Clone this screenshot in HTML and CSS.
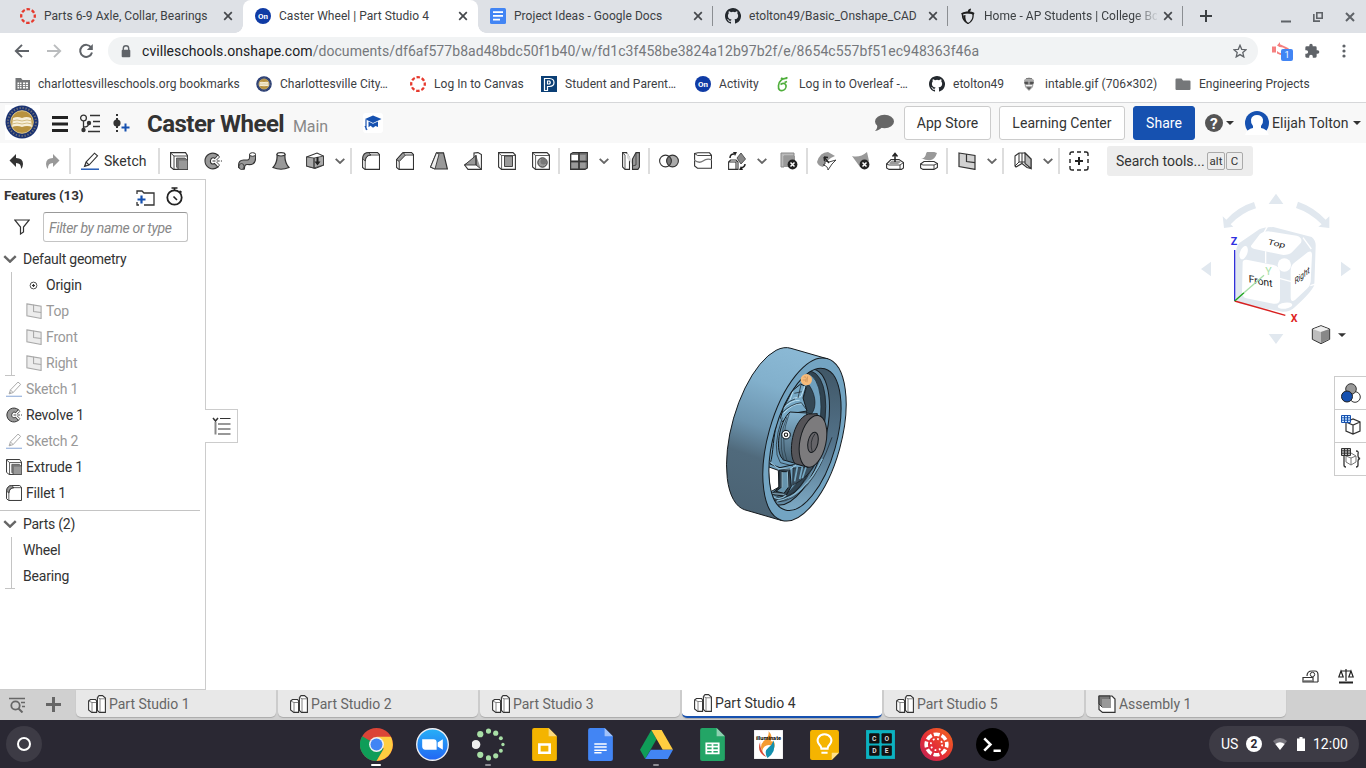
FILE: index.html
```html
<!DOCTYPE html>
<html lang="en">
<head>
<meta charset="utf-8">
<title>Caster Wheel | Part Studio 4</title>
<link rel="stylesheet" href="styles.css">
</head>
<body>
<svg class="defs" width="0" height="0">
  <symbol id="x" viewBox="0 0 10 10"><path d="M1.2 1.2l7.6 7.6M8.8 1.2L1.2 8.8" stroke="#45484c" stroke-width="1.7" fill="none"/></symbol>
  <symbol id="canvas" viewBox="0 0 16 16"><circle cx="8" cy="8" r="6.8" fill="none" stroke="#e63a2e" stroke-width="2.3" stroke-dasharray="3.5 1.84" stroke-dashoffset="1.7"/></symbol>
  <symbol id="on" viewBox="0 0 16 16"><circle cx="8" cy="8" r="8" fill="#0f3ba5"/><text x="8" y="11" font-size="8" font-weight="700" fill="#fff" text-anchor="middle" font-family="Roboto, sans-serif">On</text></symbol>
  <symbol id="github" viewBox="0 0 16 16"><path fill="#24292e" d="M8 0C3.58 0 0 3.58 0 8c0 3.54 2.29 6.53 5.47 7.59.4.07.55-.17.55-.38v-1.49c-2.23.48-2.7-.95-2.7-.95-.36-.92-.89-1.17-.89-1.17-.73-.5.05-.49.05-.49.81.06 1.23.83 1.23.83.72 1.23 1.88.87 2.34.67.07-.52.28-.88.51-1.08-1.78-.2-3.64-.89-3.64-3.95 0-.87.31-1.59.82-2.15-.08-.2-.36-1.02.08-2.12 0 0 .67-.21 2.2.82a7.6 7.6 0 0 1 4 0c1.53-1.04 2.2-.82 2.2-.82.44 1.1.16 1.92.08 2.12.51.56.82 1.27.82 2.15 0 3.07-1.87 3.75-3.65 3.95.29.25.54.73.54 1.48v2.2c0 .21.15.46.55.38A8 8 0 0 0 8 0z"/></symbol>
  <symbol id="chev" viewBox="0 0 10 6"><path d="M.7.8L5 5 9.300.8" fill="none" stroke="#666" stroke-width="1.8"/></symbol>
  <symbol id="caret" viewBox="0 0 8 4"><path d="M0 0h8L4 4z" fill="#333"/></symbol>
  <symbol id="seal" viewBox="0 0 34 34"><circle cx="17" cy="17" r="16.500" fill="#1c3473"/><circle cx="17" cy="17" r="14" fill="none" stroke="#6f7078" stroke-width="2" stroke-dasharray="1.300 1.700"/><circle cx="17" cy="17" r="11.300" fill="#b8923f" stroke="#d8c38a"/><path d="M8 13q4.500-2 9 0q4.500-2 9 0l1 9q-5-2-10 0q-5-2-10 0z" fill="#f6eed8"/><path d="M7 16q5-2 10 0q5-2 10 0M7 19q5-2 10 0q5-2 10 0" fill="none" stroke="#d3bc82"/></symbol>
  <symbol id="pencil" viewBox="0 0 18 18"><path d="M3.500 14.500L5 10 13.500 1.200 16.500 3.800 8 13zM5 10L8 13" fill="#fff" stroke="#333" stroke-width="1.100"/><path d="M3.500 14.500l1-2.500 1.500 1.400z" fill="#333"/><path d="M0 17.200h18" stroke="#1651b0" stroke-width="1.400"/></symbol>
  <symbol id="extrude" viewBox="0 0 18 18"><path d="M.6.6H15.500L17.400 3.500V17.400H3.500L.6 15z" fill="#fff" stroke="#333" stroke-width="1.100"/><path d="M.6 1L4 4V17.400M4 4H17.400" fill="none" stroke="#333" stroke-width=".9"/><path d="M6.500 6H15l2.400 2.400v9H8.800L6.500 15z" fill="#777" stroke="#444" stroke-width=".7"/><path d="M9 8.600h8.200v8.400H9z" fill="#999"/></symbol>
  <symbol id="revolve" viewBox="0 0 18 18"><path d="M14 3C8-1.500 1 3 1 9s7 10.500 13 6l-3.500-3.500C8 13 6 11 6.500 8.500S9 5 11 6.500z" fill="#999" stroke="#333" stroke-width="1.100"/><path d="M8.500 9H18" stroke="#333" stroke-dasharray="3 1.200"/><path d="M11 6.500L14 3l1.500 2-3 3M11 11.500l3 3.500 1.500-2-3-3" fill="#fff" stroke="#333" stroke-width=".9"/></symbol>
  <symbol id="fillet" viewBox="0 0 18 18"><path d="M.6 6.500C1 3 3 .6 6 .6h9.500l2 2V17.400H3l-2.400-2z" fill="#fff" stroke="#333" stroke-width="1.100"/><path d="M.7 7C1 3 3 .7 6.500.7L9 3C5.500 3.300 3.500 5.500 3.300 9z" fill="#999" stroke="#333" stroke-width=".8"/><path d="M3.200 17V9C3.500 5 5.500 3 9 3h8.300" fill="none" stroke="#333" stroke-width=".9"/></symbol>
  <symbol id="plane" viewBox="0 0 18 18"><path d="M1 1l16 2.500V17.400L1 14.500z" fill="#d2d2d2" stroke="#333" stroke-width="1.200"/><path d="M8.500 2v7.500l8.500 1.200" fill="none" stroke="#333" stroke-width="1.200"/></symbol>
  <symbol id="studio" viewBox="0 0 18 18"><path d="M.6 6L2.500 4.500H7.500L8.600 6V17.400H3.800L.6 15z" fill="#fff" stroke="#333" stroke-width="1.100"/><path d="M.6 6L4 7.500V17M4 7.500H8.500" fill="none" stroke="#666" stroke-width=".8"/><path d="M9.400 2.500L11 .6H14.500L17.400 3V17.400H11.500L9.400 15.500z" fill="#fff" stroke="#333" stroke-width="1.100"/><path d="M9.400 2.200L12 3.800V17M12 3.800H17" fill="none" stroke="#666" stroke-width=".8"/></symbol>
  <symbol id="folder" viewBox="0 0 16 14"><path d="M1.500 1.500h5l1.500 2h6.500q1 0 1 1v7.500q0 1-1 1h-13q-1 0-1-1V2.500q0-1 1-1z" fill="#757779"/></symbol>
</svg>

<div class="tabstrip">
  <div class="tab"><svg class="i16"><use href="#canvas"/></svg><span>Parts 6-9 Axle, Collar, Bearings</span><svg class="cls"><use href="#x"/></svg></div>
  <div class="tab active"><svg class="i16"><use href="#on"/></svg><span>Caster Wheel | Part Studio 4</span><svg class="cls"><use href="#x"/></svg></div>
  <div class="tab sep"><svg class="i16" viewBox="0 0 16 16"><rect width="16" height="16" rx="1.500" fill="#4285f4"/><path d="M3 4.200h10M3 7.900h10M3 11.700h7" stroke="#fff" stroke-width="1.700"/></svg><span>Project Ideas - Google Docs</span><svg class="cls"><use href="#x"/></svg></div>
  <div class="tab sep"><svg class="i16"><use href="#github"/></svg><span>etolton49/Basic_Onshape_CAD</span><svg class="cls"><use href="#x"/></svg></div>
  <div class="tab sep"><svg class="i16" viewBox="0 0 16 16"><path d="M2.500 6C5 4 10.500 4 13 6c.6 4-1.500 8-5 9.500C4.500 14 2 10 2.500 6z" fill="none" stroke="#1e1e1e" stroke-width="1.300"/><path d="M1 5.500C5 3 11 3 14.500 5l-.8 1.800C10 5.200 5 5.200 2 6.800zM8 4C7.500 2 8.500.8 11 .4 11 2.500 10 3.800 8 4zM3 7.500c0 4 2 6.500 5 8-2-2.300-3-5-2.500-8.500z" fill="#1e1e1e"/></svg><span class="fade">Home - AP Students | College Bo</span><svg class="cls"><use href="#x"/></svg></div>
  <svg class="newtab" viewBox="0 0 14 14"><path d="M7 1v12M1 7h12" stroke="#3c4043" stroke-width="2"/></svg>
  <div class="winbtns">
    <svg width="10" height="12" viewBox="0 0 10 12"><path d="M0 10.500h10" stroke="#5f6368" stroke-width="2"/></svg>
    <svg width="10" height="12" viewBox="0 0 10 12"><path d="M3.800 1.800h5.400v5.400H3.800z" fill="none" stroke="#5f6368" stroke-width="1.600"/><path d="M.8 3v7.200H7" fill="none" stroke="#5f6368" stroke-width="1.700"/></svg>
    <svg width="10" height="12" viewBox="0 0 10 12"><path d="M1 2l8 8M9 2L1 10" stroke="#5f6368" stroke-width="2"/></svg>
  </div>
</div>

<div class="navbar">
  <svg class="nb" viewBox="0 0 16 16"><path d="M15 8H2M8 1.800L1.800 8 8 14.200" fill="none" stroke="#5f6368" stroke-width="1.900"/></svg>
  <svg class="nb" viewBox="0 0 16 16"><path d="M1 8h13M8 1.800L14.200 8 8 14.200" fill="none" stroke="#babcbe" stroke-width="1.900"/></svg>
  <svg class="nb" viewBox="0 0 16 16"><path d="M13.200 4.500A6 6 0 1 0 14 9.500" fill="none" stroke="#5f6368" stroke-width="2"/><path d="M14.800 1v6h-6z" fill="#5f6368"/></svg>
  <div class="omni">
    <svg width="10" height="13" viewBox="0 0 10 13"><path d="M2.300 6V3.500a2.700 2.700 0 0 1 5.400 0V6" fill="none" stroke="#5f6368" stroke-width="1.400"/><rect x=".7" y="4.800" width="8.600" height="7.500" rx="1" fill="#5f6368"/></svg>
    <div class="url"><b>cvilleschools.onshape.com</b>/documents/df6af577b8ad48bdc50f1b40/w/fd1c3f458be3824a12b97b2f/e/8654c557bf51ec948363f46a</div>
    <svg width="14" height="14" viewBox="0 0 14 14"><path d="M7 1.300l1.700 4 4.400.4-3.300 2.900 1 4.300L7 10.600l-3.800 2.300 1-4.300L.9 5.700l4.400-.4z" fill="none" stroke="#5f6368" stroke-width="1.300"/></svg>
  </div>
  <div class="ext"><svg width="18" height="16" viewBox="0 0 18 16"><path d="M0 5.500h4v6H0z" fill="#f58080"/><path d="M5 4.500l3-3.500v2.200l5 2.300 4 2-2 1.500-4-2.500-3.500-.5zM5 10l2 1.500 3 1-1.500 1.500L5 12.500z" fill="#f58080"/></svg><i>1</i></div>
  <svg class="puz" viewBox="0 0 24 24"><path fill="#5f6368" d="M20.500 11H19V7a2 2 0 0 0-2-2h-4V3.500a2.500 2.500 0 0 0-5 0V5H4a2 2 0 0 0-2 2v3.800h1.500a2.700 2.700 0 0 1 0 5.400H2V20c0 1.100.9 2 2 2h3.800v-1.500a2.700 2.700 0 0 1 5.400 0V22H17a2 2 0 0 0 2-2v-4h1.500a2.500 2.500 0 0 0 0-5z"/></svg>
  <svg class="dots" viewBox="0 0 4 14"><g fill="#5f6368"><circle cx="2" cy="2" r="1.600"/><circle cx="2" cy="7" r="1.600"/><circle cx="2" cy="12" r="1.600"/></g></svg>
</div>

<div class="bookmarks">
  <div class="w1"><svg viewBox="0 0 16 14"><path d="M.5 1h5.500l1.500 2h7.500v10H.5z" fill="#757779"/><path d="M2.500 5.500h4v6h-4zM8 5.500h5v6H8z" fill="#fff"/><path d="M2.500 7.500H13M2.500 9.500H13M4.500 5v7M10.500 5v7" stroke="#757779" stroke-width=".8"/></svg><span>charlottesvilleschools.org bookmarks</span></div>
  <div class="w2"><svg><use href="#seal"/></svg><span>Charlottesville City…</span></div>
  <div class="w3"><svg><use href="#canvas"/></svg><span>Log In to Canvas</span></div>
  <div class="w2"><svg viewBox="0 0 16 16"><path d="M0 0h16v16H0z" fill="#0b3f75"/><path d="M3.500 14.500V2.500h5q4.500.3 4.500 4t-4.500 4h-2v4zM6.500 5v3h2q1.500-1.500 0-3z" fill="none" stroke="#fff" stroke-width="1.200"/></svg><span>Student and Parent…</span></div>
  <div class="w4"><svg><use href="#on"/></svg><span>Activity</span></div>
  <div class="w5"><svg viewBox="0 0 16 16"><path d="M12 2.500C8 1.500 4 5 3.500 9.500S5.500 15 7.500 14.500s4-2.500 3.500-5S8 7 5.500 8.500M6 2C8 3.500 10 3 12.500 1.500M9.500 6.500l2.500-1" fill="none" stroke="#4fae3b" stroke-width="1.700"/></svg><span>Log in to Overleaf -…</span></div>
  <div class="w6"><svg><use href="#github"/></svg><span>etolton49</span></div>
  <div class="w2"><svg viewBox="0 0 16 16"><path d="M3 4q5-5 10 0l-1 7-4 4-4-4z" fill="#aaa"/><path d="M3.500 6h3.500v2H4zM9 6h3.500l-.5 2H9zM6 11.500h4l-2 2zM5 2.500h6" fill="#444" stroke="#666" stroke-width=".7"/><path d="M5 9.500h6" stroke="#eee"/></svg><span>intable.gif (706×302)</span></div>
  <div><svg viewBox="0 0 16 14"><use href="#folder"/></svg><span>Engineering Projects</span></div>
</div>

<header class="head">
  <div class="logo"><svg width="34" height="34"><use href="#seal"/></svg></div>
  <svg class="burger" width="16" height="16" viewBox="0 0 16 16"><path d="M0 1.500h16M0 8h16M0 14.500h16" stroke="#222" stroke-width="2.900"/></svg>
  <svg class="vers" width="20" height="19" viewBox="0 0 20 19"><g fill="none" stroke="#333" stroke-width="1.300"><circle cx="3.500" cy="4" r="2.900"/><path d="M3.500 7v9M3.500 13q5 0 5-3"/><path d="M10 1.500h10M13 7.500h7M13 12.500h7M8 17.500h12"/></g><circle cx="3.500" cy="16" r="2.200" fill="#333"/><circle cx="9" cy="9" r="2.200" fill="#333"/></svg>
  <svg class="ins" width="17" height="18" viewBox="0 0 17 18"><path d="M4 0v18" stroke="#333" stroke-width="2" stroke-dasharray="2 2"/><circle cx="4" cy="9" r="3.600" fill="#333"/><path d="M8.500 13.500h8M12.500 9.500v8" stroke="#1651b0" stroke-width="2"/></svg>
  <h1>Caster Wheel</h1><span class="main">Main</span>
  <div class="cap"><svg width="18" height="16" viewBox="0 0 18 16"><path d="M9 .5L17.500 4 9 8 1 4z" fill="#1651b0"/><path d="M4.500 6.500L9 8.800l5-2.300V12l-2.500-1-2.500 1.800-2.500-2-2 1.500z" fill="#1651b0"/><path d="M2 4.500v10M1 11l2 4" stroke="#1651b0" stroke-width="1.200"/></svg></div>
  <svg class="bub" width="20" height="18" viewBox="0 0 20 18"><ellipse cx="10.500" cy="7.500" rx="9.500" ry="6.800" fill="#666"/><path d="M3 11q1 3-2 6 5-1 7-4z" fill="#666"/></svg>
  <div class="btn app">App Store</div><div class="btn learn">Learning Center</div><div class="btn share">Share</div>
  <svg class="help" width="18" height="18" viewBox="0 0 18 18"><circle cx="9" cy="9" r="9" fill="#555"/><text x="9" y="14.500" font-size="15.500" font-weight="700" text-anchor="middle" fill="#fff">?</text></svg>
  <svg class="car c1"><use href="#caret"/></svg>
  <svg class="ava" width="24" height="24" viewBox="0 0 24 24"><circle cx="12" cy="12" r="12" fill="#1651b0"/><path d="M0 24q2-6 8-7v-2Q5.500 12 6 8.500 7 4 12 4t6 4.500Q18.500 12 16 15v2q6 1 8 7z" fill="#fff"/></svg>
  <span class="user">Elijah Tolton</span>
  <svg class="car"><use href="#caret"/></svg>
</header>

<div class="tools">
  <div class="ic undo"><svg viewBox="0 0 18 18"><path d="M8 2v4q7 0 7 6 0 3-2 5 .5-6-5-6v4L1.500 8.500z" fill="#333"/></svg></div>
  <div class="ic redo"><svg viewBox="0 0 18 18"><path d="M10 2v4q-7 0-7 6 0 3 2 5-.5-6 5-6v4l6.500-6.500z" fill="#999"/></svg></div>
  <u></u>
  <div class="sk"><svg><use href="#pencil"/></svg><span>Sketch</span></div>
  <u></u>
  <div class="ic"><svg><use href="#extrude"/></svg></div>
  <div class="ic"><svg><use href="#revolve"/></svg></div>
  <div class="ic"><svg viewBox="0 0 18 18"><path d="M.6 13c0-3 1.500-5 5-5 4 0 6 .5 6-3V2.500q3-2 6 0V6c0 6-4 7-8 6.500-2-.3-3 .5-3.200 4.500Q4 17.800.6 15.500z" fill="#999" stroke="#333" stroke-width="1.100"/><ellipse cx="14.600" cy="2.500" rx="3" ry="1.800" fill="#fff" stroke="#333"/><ellipse cx="3.500" cy="14.500" rx="2.500" ry="3" fill="#999" stroke="#333" stroke-width=".8"/></svg></div>
  <div class="ic"><svg viewBox="0 0 18 18"><path d="M5 2.500C5.500 8 4 12 1 15.500q8 3.500 16 0C14 12 12.500 8 13 2.500z" fill="#999" stroke="#333" stroke-width="1.200"/><ellipse cx="9" cy="2.300" rx="4" ry="1.700" fill="#fff" stroke="#333" stroke-width="1.100"/></svg></div>
  <div class="ic"><svg viewBox="0 0 18 18"><path d="M.6 5L11 1l6.500 3v9L9 16.500.6 14z" fill="#fff" stroke="#333" stroke-width="1.100"/><path d="M.6 5L8 6v10L.6 14zM8 6l9.500-2v9L8 16z" fill="#aaa" stroke="#333" stroke-width=".8"/><path d="M11.500 5v6" stroke="#222" stroke-width="2"/><path d="M8.500 9.500h6l-3 4z" fill="#222"/></svg></div>
  <div class="ch"><svg><use href="#chev"/></svg></div><u></u>
  <div class="ic"><svg><use href="#fillet"/></svg></div>
  <div class="ic"><svg viewBox="0 0 18 18"><path d="M.6 7.500L7 .6h8.500l2 2V17.400H3L.6 15.500z" fill="#fff" stroke="#333" stroke-width="1.100"/><path d="M.6 7.500L7 .6 9.500 3 3.200 9.500z" fill="#999" stroke="#333"/><path d="M3.200 9.500V17M9.500 3h8" stroke="#333"/></svg></div>
  <div class="ic"><svg viewBox="0 0 18 18"><path d="M6.500.8h7L17.400 17H5L.6 15z" fill="#999" stroke="#333" stroke-width="1.200"/><path d="M.6 15L6.500.8l2.500 1.500L5 17z" fill="#eee" stroke="#333" stroke-width=".9"/></svg></div>
  <div class="ic"><svg viewBox="0 0 18 18"><path d="M.6 13L10 7V1l4-.4 3.400 2V17.400H4z" fill="#fff" stroke="#333" stroke-width="1.100"/><path d="M.6 13L12 3.500V13H3zM12 3v10l5 4" fill="#999" stroke="#333" stroke-width=".9"/></svg></div>
  <div class="ic"><svg viewBox="0 0 18 18"><path d="M.6.6H15l2.400 2.400V17.400H3.500L.6 15z" fill="#fff" stroke="#333" stroke-width="1.100"/><path d="M.6 1l3 2.500v14M3.500 3.500h14" fill="none" stroke="#333" stroke-width=".8"/><path d="M6.500 4h8v10.500h-8z" fill="#999" stroke="#333" stroke-width=".9"/></svg></div>
  <div class="ic"><svg viewBox="0 0 18 18"><path d="M.6.6H15l2.400 2.400V17.400H3.500L.6 15z" fill="#fff" stroke="#333" stroke-width="1.100"/><path d="M.6 1l3 2.500v14M3.500 3.500h14" fill="none" stroke="#333" stroke-width=".8"/><circle cx="10.500" cy="10.500" r="4.700" fill="#999" stroke="#333"/><circle cx="11.500" cy="9.500" r="3" fill="#777"/></svg></div>
  <u></u>
  <div class="ic"><svg viewBox="0 0 18 18"><path d="M.6 2L3 .6h14.400V16L15 17.400H.6z" fill="#777" stroke="#333" stroke-width="1.100"/><path d="M1.500 3H8v5.500H1.500z" fill="#fff"/><path d="M10 3h5.500v5.500H10zM1.500 10.500H8V16H1.500zM10 10.500h5.500V16H10z" fill="#999"/><path d="M9 1v16M1 9.500h16" stroke="#333" stroke-width="1.500"/></svg></div>
  <div class="ch"><svg><use href="#chev"/></svg></div>
  <div class="ic"><svg viewBox="0 0 18 18"><path d="M.6.6h4L7.500 6v11.400H3L.6 15z" fill="#fff" stroke="#333" stroke-width="1.100"/><path d="M.6 1L3 3v14" fill="none" stroke="#333" stroke-width=".8"/><path d="M5 .5l5 8V12L5 6z" fill="#ddd"/><path d="M10.500 7L14 .6h3.400V15l-1.500 2.400h-5.400z" fill="#999" stroke="#333" stroke-width="1.100"/><path d="M14 1v12l-3.500 1" fill="none" stroke="#333" stroke-width=".8"/></svg></div>
  <u></u>
  <div class="ic"><svg class="big" viewBox="0 0 20 20"><circle cx="6.500" cy="10" r="5.900" fill="#fff"/><circle cx="13.500" cy="10" r="5.900" fill="#aaa"/><path d="M10 5.200a5.900 5.900 0 0 1 0 9.600 5.900 5.900 0 0 1 0-9.600z" fill="#777"/><g fill="none" stroke="#333" stroke-width="1.100"><circle cx="6.500" cy="10" r="5.900"/><circle cx="13.500" cy="10" r="5.900"/></g></svg></div>
  <div class="ic"><svg viewBox="0 0 18 18"><path d="M.6 1.500L4 .8h11.500l2 2.500v13H3.500L.6 14z" fill="#fff" stroke="#333" stroke-width="1.100"/><path d="M.6 1.500l3 2h14" fill="none" stroke="#333" stroke-width=".9"/><path d="M0 8q5 4 9 1t9-1" fill="none" stroke="#777" stroke-width="1.300"/></svg></div>
  <div class="ic"><svg viewBox="0 0 18 18"><path d="M.6 10l2-2H8l2 2v7.400H.6zM.6 10H8v7" fill="#fff" stroke="#333" stroke-width="1.100"/><path d="M9 6l4-5 4.500 6L13 12z" fill="#888" stroke="#555"/><path d="M2 6q0-4 4-4M17 12q0 3-4 4" fill="none" stroke="#222" stroke-width="1.500"/><path d="M5 0h4L7 4zM15 18h-4l2-4z" fill="#222"/></svg></div>
  <div class="ch"><svg><use href="#chev"/></svg></div>
  <div class="ic"><svg viewBox="0 0 18 18"><path d="M1 1h13v3H4v11H1z" fill="#bbb" stroke="#888"/><path d="M4 4h11v11H4z" fill="#999"/><circle cx="12.500" cy="12.500" r="4.900" fill="#222"/><path d="M10.500 10.500l4 4M14.500 10.500l-4 4" stroke="#fff" stroke-width="1.500"/></svg></div>
  <u></u>
  <div class="ic"><svg class="big" viewBox="0 0 20 20"><path d="M0 11Q3 1 11 1l7 4Q10 8 6 16 1 15 0 11z" fill="#999"/><path d="M8 10l4 1 7-2-4 4-4 6q0-4-5-5 3 0 2-4z" fill="#fff" stroke="#444"/><path d="M7 6l5 6M7 6l4 .5M7 6l.5 4" stroke="#222" stroke-width="1.300"/></svg></div>
  <div class="ic"><svg viewBox="0 0 18 18"><path d="M0 4q8 2 15-4l2 9-9 6z" fill="#999"/><circle cx="12.500" cy="12.500" r="4.900" fill="#222"/><path d="M10.500 10.500l4 4M14.500 10.500l-4 4" stroke="#fff" stroke-width="1.500"/></svg></div>
  <div class="ic"><svg viewBox="0 0 18 18"><path d="M.6 12L5 7.500h8l4.500 3v5.500l-2 1.400H3L.6 16z" fill="#fff" stroke="#333" stroke-width="1.100"/><path d="M.6 12L3 13h11l3.500-2.500M14 13v4" fill="none" stroke="#333" stroke-width=".9"/><path d="M3 11l3-2.500h7l2 1.500-3 2H4z" fill="#999"/><path d="M9 10V2M6.500 4.500L9 1.500l2.500 3" fill="none" stroke="#222" stroke-width="1.500"/></svg></div>
  <div class="ic"><svg viewBox="0 0 18 18"><path d="M1 6Q5 7 6 2t11-1Q15 7 11 8T1 6z" fill="#999"/><path d="M.6 12L4 9.500h10l3.400 2v4L14 17.400H3L.6 16z" fill="#fff" stroke="#333" stroke-width="1.100"/><path d="M.6 12L3 13h11l3.500-1.500M14 13v4" fill="none" stroke="#333" stroke-width=".9"/></svg></div>
  <u></u>
  <div class="ic"><svg><use href="#plane"/></svg></div><div class="ch"><svg><use href="#chev"/></svg></div><u></u>
  <div class="ic"><svg viewBox="0 0 18 18"><path d="M1 4L5 1h6l6 6v9.500l-4-1-5-4-6 3.500-1-1z" fill="#fff" stroke="#333" stroke-width="1.100"/><path d="M11 1l6 6v9.500l-6-5z" fill="#bbb" stroke="#333" stroke-width="1.100"/><path d="M5 1v9M8 1v10M1 14l4-4h6" fill="none" stroke="#333"/></svg></div><div class="ch"><svg><use href="#chev"/></svg></div><u></u>
  <div class="ic"><svg class="big" viewBox="0 0 20 20"><path d="M1 4V3q0-2 2-2h2M8 1h4M15 1h2q2 0 2 2v2M19 8v4M19 15v2q0 2-2 2h-2M12 19H8M5 19H3q-2 0-2-2v-2M1 12V8" fill="none" stroke="#222" stroke-width="1.400"/><path d="M10 6v8M6 10h8" stroke="#222" stroke-width="2"/></svg></div>
  <div class="search"><span>Search tools...</span><kbd>alt</kbd><kbd class="kc">C</kbd></div>
</div>

<div class="work">
  <aside>
    <div class="ft"><b>Features (13)</b>
      <svg class="addf" width="19" height="16" viewBox="0 0 19 16"><path d="M1 4V1h5l2 2h10v12H8M1 12v3h2" fill="none" stroke="#333" stroke-width="1.300"/><path d="M5.500 5.500v8M1.500 9.500h8" stroke="#1651b0" stroke-width="2.200"/></svg>
      <svg class="clock" width="17" height="19" viewBox="0 0 17 19"><circle cx="8.500" cy="10.500" r="7.200" fill="none" stroke="#222" stroke-width="1.800"/><path d="M5.500 1h6M8.500 1v3M13.500 4l2 1.500M7.500 9.500l3.500 3.500" stroke="#222" stroke-width="1.600"/></svg></div>
    <div class="filter"><svg width="16" height="16" viewBox="0 0 16 16"><path d="M.8 1h14.400L9.500 8v5l-3 2V8z" fill="none" stroke="#333" stroke-width="1.200"/></svg><div class="inp">Filter by name or type</div></div>
    <div class="row sec"><svg class="big-ch"><use href="#chev"/></svg>Default geometry</div>
    <div class="tree">
      <div class="row"><svg class="org" viewBox="0 0 9 9"><circle cx="4.500" cy="4.500" r="3.400" fill="none" stroke="#555"/><path d="M4.500 3v3M3 4.500h3" stroke="#333" stroke-width="1.200"/></svg>Origin</div>
      <div class="row dim"><svg class="pl"><use href="#plane"/></svg>Top</div>
      <div class="row dim"><svg class="pl"><use href="#plane"/></svg>Front</div>
      <div class="row dim"><svg class="pl"><use href="#plane"/></svg>Right</div>
    </div>
    <div class="row f dim"><svg><use href="#pencil"/></svg>Sketch 1</div>
    <div class="row f"><svg><use href="#revolve"/></svg>Revolve 1</div>
    <div class="row f dim"><svg><use href="#pencil"/></svg>Sketch 2</div>
    <div class="row f"><svg><use href="#extrude"/></svg>Extrude 1</div>
    <div class="row f"><svg><use href="#fillet"/></svg>Fillet 1</div>
    <div class="row sec parts"><svg class="big-ch"><use href="#chev"/></svg>Parts (2)</div>
    <div class="tree t2"><div class="row">Wheel</div><div class="row">Bearing</div></div>
  </aside>
  <main>
    <div class="handle"><svg width="19" height="18" viewBox="0 0 19 18"><path d="M1 1l2.500 3L6 1" fill="none" stroke="#333" stroke-width="1.500"/><path d="M3.500 5v12.500" stroke="#888" stroke-width="2"/><path d="M8 1.500h10.500M6 7h12.500M6 12h12.500M6 17h12.500" stroke="#333" stroke-width="1.200"/></svg></div>
    <svg class="wheel" viewBox="0 0 450 615">
      <defs>
        <linearGradient id="body" x1=".65" y1="0" x2=".45" y2="1"><stop offset="0" stop-color="#8bb9d5"/><stop offset=".25" stop-color="#82b0cc"/><stop offset=".5" stop-color="#6b93ad"/><stop offset=".68" stop-color="#506a7c"/><stop offset="1" stop-color="#4b6374"/></linearGradient>
        <linearGradient id="wall" x1="0" y1="0" x2="0" y2="1"><stop offset="0" stop-color="#3e5463"/><stop offset=".5" stop-color="#527188"/><stop offset="1" stop-color="#83b1cc"/></linearGradient>
        <linearGradient id="hub" x1="0" y1="0" x2="0" y2="1"><stop offset="0" stop-color="#85b3cf"/><stop offset="1" stop-color="#425c6d"/></linearGradient>
        <clipPath id="rim"><ellipse cx="285" cy="328" rx="94" ry="220" transform="rotate(15.600 285 328)"/></clipPath>
      </defs>
      <g stroke="#151a1e" stroke-width="3" fill="none">
        <path d="M352.800 86.600L243 55A107.500 251 15.600 0 0 104.200 539.400L214.200 571.400Z" fill="url(#body)"/>
        <ellipse cx="283.500" cy="328.500" rx="109" ry="252" transform="rotate(15.600 283.500 328.500)" fill="#73a4c2"/>
        <g clip-path="url(#rim)">
          <path d="M150 90h270v480H150z" fill="url(#wall)" stroke="none"/>
          <ellipse cx="254" cy="320" rx="91" ry="211" transform="rotate(15.600 254 320)" fill="#628aa4"/>
          <ellipse cx="249" cy="318" rx="85" ry="202" transform="rotate(15.600 249 318)" fill="#314451" stroke-width="2"/>
          <ellipse cx="240" cy="316" rx="80" ry="193" transform="rotate(15.600 240 316)" fill="#6fa0be" stroke="#1d2a33" stroke-width="2"/>
          <path d="M293 160C321 195 319 235 304 252L289 248 278 210z" fill="#344855" stroke-width="2"/>
          <path d="M246 183L272 162 288 170 279 204 291 243 255 249 207 281 219 237z" fill="#77a8c5"/>
          <path d="M250 205L273 200 285 167M249 184L239 212M215 239Q245 208 269 211M221 250Q249 219 275 222" stroke="#b9def0" stroke-width="3"/>
          <path d="M253 190L275 185M255 207Q220 217 207 258M273 164L264 204M215 249Q242 222 274 218L288 237" stroke-width="2"/>
          <path d="M207 258C186 318 192 370 180 402L210 413 250 404 278 390" fill="#6d9dbb"/>
          <path d="M217 263Q184 358 211 398L249 408M226 268Q191 355 220 391" stroke-width="2"/>
          <path d="M174 410L205 421 207 471 181 486z" fill="#fff"/>
          <path d="M207 421L239 416 244 469 226 500 184 492 207 472z" fill="#32434f"/>
          <path d="M215 425h19l1 47-13 18-24-6 17-13z" fill="#6794ad"/>
          <path d="M174 391L205 416 241 417 259 405M216 426v46M232 424l2 48M185 491l38 2" stroke="#a9d3e7" stroke-width="2.500"/>
          <path d="M249 414L248 466Q297 441 322 393L292 411z" fill="#3b505f" stroke-width="2"/>
          <path d="M262 411l-8 43M277 411l-8 36M289 409l-12 36" stroke="#75a9c4" stroke-width="5"/>
          <path d="M184 492L214 504Q295 491 350 300M202 516Q299 512 366 322" stroke-width="2"/>
          <path d="M191 501Q210 512 229 496M200 513Q282 500 337 386" stroke="#88b8d1" stroke-width="4"/>
        </g>
        <ellipse cx="285" cy="328" rx="94" ry="220" transform="rotate(15.600 285 328)"/>
        <path d="M291 249L240 246C208 272 191 368 221 390L273 405Z" fill="url(#hub)"/>
        <path d="M231 261Q202 328 221 389M238 250Q208 328 231 393" stroke="#243742" stroke-width="2"/>
        <path d="M322 251L295 252C246 268 232 374 255 401L294 412Z" fill="#555458"/>
        <ellipse cx="309" cy="334" rx="39" ry="79" transform="rotate(12 309 334)" fill="#7c7b7d"/>
        <ellipse cx="309" cy="337" rx="15" ry="31" transform="rotate(12 309 337)" fill="#656468"/>
        <path d="M315 311Q297 334 307 367" stroke-width="2"/>
        <circle cx="228" cy="314" r="9" fill="#151515" stroke="#fff" stroke-width="4.500"/><circle cx="228" cy="314" r="13"/><circle cx="228" cy="314" r="3.500" fill="#fff" stroke="none"/>
        <circle cx="289" cy="149" r="17" fill="#f7bb7a" stroke="none"/><path d="M281 142q6-6 8 4l-2 10M293 139l-2 18M278 150l10 0" stroke="#c28d53" stroke-width="2"/>
      </g>
    </svg>
    <svg class="cube" viewBox="0 0 528 510">
      <g fill="#e1e8ef"><path d="M258 26l22 31h-44zM258 477l22-30h-44zM33 252l30-22v44zM483 252l-30-22v44z"/><path d="M98 94L102 129 130 125 122 118Q155 83 198 70L192 51Q145 65 109 104zM418 94L418 129 385 125 395 118Q361 83 318 69L324 50Q371 66 407 104z"/>
      <path d="M148 174L208 133Q220 127 250 126L365 156Q378 166 377 184L373 300Q364 322 315 366Q301 381 277 380L150 356Q136 347 136 329L137 211Q138 184 148 174z"/></g>
      <path d="M183 182L210 147Q218 140 235 139L320 152Q339 158 333 173L306 202Q297 210 280 210L194 192Q181 189 183 182zM158 230Q160 223 170 224L251 240Q269 245 270 261V341Q270 359 250 356L169 340Q156 336 156 321zM302 257Q302 243 312 234L353 202Q366 194 366 210L362 290Q361 302 351 311L315 345Q302 354 302 337z" fill="#fff"/>
      <g fill="#fff"><ellipse cx="161" cy="203" rx="11" ry="21" transform="rotate(20 161 203)"/><circle cx="283" cy="240" r="20"/><ellipse cx="285" cy="362" rx="22" ry="9" transform="rotate(-8 285 362)"/></g>
      <path d="M227 199v35M268 280l36 10M339 158l25 34M222 143l10-18M361 302l16-5" stroke="#fff" stroke-width="4"/>
      <g class="faces"><text transform="matrix(1 .2 -.22 .7 232 178)" font-size="31">Top</text><text transform="matrix(1 .2 .03 1 176 292)" font-size="31">Front</text><text transform="matrix(.7 -.56 .02 1 314 299)" font-size="28">Right</text></g>
      <path d="M134 348V195" stroke="#3030d8" stroke-width="4"/><path d="M134 348l152 43" stroke="#d82020" stroke-width="4"/><path d="M134 348l28-25" stroke="#18a518" stroke-width="4"/><path d="M162 323l60-52" stroke="#a7dfa7" stroke-width="4"/>
      <g class="axes"><text x="122" y="180" fill="#3030e0">Z</text><text x="302" y="411" fill="#de2525">X</text><text x="226" y="270" fill="#a7dfa7" font-weight="400">Y</text></g>
      <path d="M367 432l26-10 26 10v31l-26 13-26-13z" fill="#bdbdbd" stroke="#333" stroke-width="3"/><path d="M369 433l24 8 24-8-24-9z" fill="#eee"/><path d="M393 441l24-8v29l-24 12z" fill="#888"/><path d="M444 445h24l-12 11z" fill="#333"/>
    </svg>
    <div class="rpanel">
      <div><svg viewBox="0 0 20 20"><circle cx="14" cy="14" r="5.300" fill="#fff" stroke="#333"/><circle cx="10" cy="6" r="5.300" fill="#999" stroke="#333"/><circle cx="6" cy="13.500" r="5.500" fill="#1651b0" stroke="#222"/></svg></div>
      <div><svg viewBox="0 0 20 20"><path d="M5 7l7-3 7 3v9l-7 3-7-3zM5 7l7 3 7-3M12 10v9" fill="#fff" stroke="#333" stroke-width="1.200"/><path d="M.5.500h9v7h-9z" fill="#cbe8ff" stroke="#1651b0"/><path d="M.5 2.800h9M.5 5.200h9M3.500.5v7M6.500.5v7" stroke="#1651b0"/></svg></div>
      <div><svg viewBox="0 0 20 20"><path d="M5 8l5-3 5 3v6l-5 3-5-3zM5 8l5 2 5-2M10 10v7" fill="#fff" stroke="#777"/><path d="M3 8v9q0 2 2 2M15 3q3 0 2 3v2q0 2 2 2.500Q17 11 17 13v4q0 2-2 2" fill="none" stroke="#333" stroke-width="1.300"/><path d="M.5.500h9v7h-9z" fill="#bbb" stroke="#333"/><path d="M.5 2.800h9M.5 5.200h9M3.500.5v7M6.500.5v7" stroke="#333"/></svg></div>
    </div>
    <div class="measure"><svg width="17" height="16" viewBox="0 0 17 16"><path d="M5 8q0-5 5-5h3q3 0 3 4v7M1 9.500h10V14H1zM11 14h5" fill="none" stroke="#333" stroke-width="1.200"/><circle cx="10.500" cy="6.500" r="2.200" fill="none" stroke="#333"/><path d="M3 12v2M5 12v2M7 12v2M9 12v2" stroke="#333"/></svg><svg width="16" height="16" viewBox="0 0 16 16"><path d="M1 14.500h14" stroke="#222" stroke-width="2"/><path d="M8 1v12M3 3h10M3 3L.8 9h4.400zM13 3l-2.200 6h4.400z" fill="none" stroke="#222" stroke-width="1.200"/></svg></div>
  </main>
</div>

<div class="btabs">
  <svg class="s1" viewBox="0 0 17 16"><path d="M0 1.500h16M12 5.500h4M13 9.500h3" stroke="#666" stroke-width="1.700"/><circle cx="6.500" cy="8.500" r="4.200" fill="none" stroke="#666" stroke-width="1.800"/><path d="M9.500 11.500l4 4" stroke="#666" stroke-width="2"/></svg>
  <svg class="s2" viewBox="0 0 15 15"><path d="M7.500 0v15M0 7.500h15" stroke="#666" stroke-width="3"/></svg>
  <div class="bt"><svg><use href="#studio"/></svg>Part Studio 1</div>
  <div class="bt"><svg><use href="#studio"/></svg>Part Studio 2</div>
  <div class="bt"><svg><use href="#studio"/></svg>Part Studio 3</div>
  <div class="bt cur"><svg><use href="#studio"/></svg>Part Studio 4</div>
  <div class="bt"><svg><use href="#studio"/></svg>Part Studio 5</div>
  <div class="bt"><svg viewBox="0 0 18 18"><path d="M1 1h13l3 3v13.400H4.500L1 14.500z" fill="#fff" stroke="#333" stroke-width="1.200"/><path d="M1 1h11v11H4L1 9z" fill="#777" stroke="#333"/><path d="M4 4h9v9H4z" fill="#999"/></svg>Assembly 1</div>
</div>

<footer>
  <div class="launch"><i></i></div>
  <div class="apps">
    <div class="on"><svg viewBox="0 0 32 32"><circle cx="16" cy="16" r="16" fill="#db4437"/><path d="M2.100 8A16 16 0 0 0 16 32l7-12-7-4z" fill="#0f9d58"/><path d="M16 32A16 16 0 0 0 30 8.500H16L23 20z" fill="#ffcd40"/><circle cx="16" cy="16" r="7.200" fill="#f1f1f1"/><circle cx="16" cy="16" r="5.800" fill="#4285f4"/></svg></div>
    <div><svg viewBox="0 0 32 32"><defs><linearGradient id="zm" x2="0" y2="1"><stop stop-color="#27b0f7"/><stop offset="1" stop-color="#2366f4"/></linearGradient></defs><circle cx="16" cy="16" r="15.300" fill="url(#zm)" stroke="#f0f0f4" stroke-width="1.300"/><path d="M6 11h11q3 0 3 3v7H9q-3 0-3-3zM21 14l5-3v10l-5-3z" fill="#fff"/></svg></div>
    <div class="run"><svg viewBox="0 0 32 32"><g fill="#a8dfa6"><circle cx="8" cy="6" r="3"/><circle cx="16" cy="3" r="2.500"/><circle cx="23" cy="5" r="2.500"/><circle cx="28" cy="10" r="1.900"/><circle cx="30" cy="16" r="1.600"/><circle cx="28" cy="22" r="1.900"/><circle cx="23" cy="27" r="2.500"/><circle cx="16" cy="29" r="2.500"/><circle cx="8" cy="26" r="3"/></g><circle cx="3.800" cy="16" r="4.300" fill="#eee"/></svg></div>
    <div><svg viewBox="0 0 32 32"><path d="M4 2q0-2 2-2h14l8 8v22q0 2-2 2H6q-2 0-2-2z" fill="#f4b400"/><path d="M20 0l8 8h-8z" fill="#fada80"/><path d="M11 16h10v8H11z" fill="none" stroke="#fff" stroke-width="2.500"/></svg></div>
    <div><svg viewBox="0 0 32 32"><path d="M4 2q0-2 2-2h14l8 8v22q0 2-2 2H6q-2 0-2-2z" fill="#4285f4"/><path d="M20 0l8 8h-8z" fill="#a1c2fa"/><path d="M10 15.500h12M10 18.500h12M10 21.500h12M10 24h7" stroke="#fff" stroke-width="1.500"/></svg></div>
    <div class="run"><svg viewBox="0 0 32 32"><path d="M11 2L0 21l5 9L16 11z" fill="#0f9d58"/><path d="M11 2h10l11 19H22z" fill="#ffcd40"/><path d="M10.500 21H32l-5 9H5z" fill="#4285f4"/></svg></div>
    <div><svg viewBox="0 0 32 32"><path d="M4 2q0-2 2-2h14l8 8v22q0 2-2 2H6q-2 0-2-2z" fill="#23a566"/><path d="M20 0l8 8h-8z" fill="#8ed1b1"/><path d="M10 15h12v9.500H10zM10 18h12M10 21.500h12M16 15v9" fill="none" stroke="#fff" stroke-width="1.700"/></svg></div>
    <div><svg viewBox="0 0 32 32"><path d="M2 2h28v28H2z" fill="#fff"/><path d="M16 3q5 5 2 10 6-1 3 8-2-6-7-4-6 3-3 9-5-9 1-14 5-4 4-9z" fill="#f49b32"/><path d="M8 13q-1 8 6 15Q4 24 8 13z" fill="#d84631"/><path d="M21 12q3 11-6 17-4-6 1-10 3-2 5-7z" fill="#148fad"/><text x="16" y="12" text-anchor="middle" font-size="5.500" font-weight="700">illuminate</text></svg></div>
    <div><svg viewBox="0 0 32 32"><path d="M4 2h24q2 0 2 2v20l-7 7H4q-2 0-2-2V4q0-2 2-2z" fill="#f5b400"/><path d="M30 24h-7v7z" fill="#ffe08a"/><path d="M13 20q0-2-2-4c-4-5 0-10 5-10s9 5 5 10q-2 2-2 4zM13 24h6" fill="none" stroke="#fff" stroke-width="2"/></svg></div>
    <div><svg viewBox="0 0 32 32"><path d="M2 2h28v28H2z" fill="#0cb2c0"/><g fill="#111"><rect x="5" y="5" width="10" height="10" rx="1"/><rect x="17" y="5" width="10" height="10" rx="1"/><rect x="5" y="17" width="10" height="10" rx="1"/><rect x="17" y="17" width="10" height="10" rx="1"/></g><g font-size="6.500" font-weight="700" fill="#ddd" text-anchor="middle"><text x="10" y="12.500">C</text><text x="22" y="12.500">O</text><text x="10" y="24.500">D</text><text x="22" y="24.500">E</text></g></svg></div>
    <div><svg viewBox="0 0 32 32"><defs><linearGradient id="cv" x1="1" y1="0" x2="0" y2="1"><stop stop-color="#f36b1d"/><stop offset=".6" stop-color="#e32b38"/><stop offset="1" stop-color="#b9225a"/></linearGradient></defs><circle cx="16" cy="16" r="16" fill="url(#cv)"/><circle cx="16" cy="16" r="10" fill="none" stroke="#fff" stroke-width="3.500" stroke-dasharray="5.850 2" stroke-dashoffset="3"/><circle cx="16" cy="16" r="5.500" fill="none" stroke="#fff" stroke-width="1.700" stroke-dasharray="1.700 2.620"/></svg></div>
    <div><svg viewBox="0 0 32 32"><circle cx="16" cy="16" r="16" fill="#000"/><path d="M8 10l6 6-6 6M17 22h7" fill="none" stroke="#fff" stroke-width="2.500"/></svg></div>
  </div>
  <div class="status"><span class="us">US</span><i>2</i><svg class="wifi" width="14" height="12" viewBox="0 0 14 12"><path d="M0 3q7-6 14 0L7 12z" fill="#77757d"/><path d="M2.300 6q4.700-3.500 9.400 0L7 12z" fill="#fff"/></svg><svg class="bat" width="8" height="14" viewBox="0 0 8 14"><path d="M2.500 0h3v1.500H8V14H0V1.500h2.500z" fill="#fff"/></svg><span class="tm">12:00</span></div>
</footer>
</body>
</html>
```
FILE: styles.css
```css
* { box-sizing: border-box; }
body { margin: 0; width: 1366px; height: 768px; overflow: hidden; display: flex; flex-direction: column; background: #fff; font-family: Roboto, "Noto Sans", sans-serif; color: #333; font-size: 14px; }
svg { display: block; flex: none; }
.defs { display: none; }
b { font-weight: 700; }

.tabstrip { height: 33px; flex: none; background: #dee1e6; display: flex; align-items: center; padding-left: 8px; font-size: 12px; color: #3c4043; }
.tab { width: 235px; height: 33px; flex: none; display: flex; align-items: center; padding: 0 10px 2px 12px; position: relative; letter-spacing: .04px; }
.tab span { margin-left: 8px; width: 173px; flex: none; white-space: nowrap; overflow: hidden; }
.tab .cls { width: 10px; height: 10px; margin-left: 6px; }
.i16 { width: 16px; height: 16px; }
.tab.active { background: #fff; border-radius: 8px 8px 0 0; }
.tab.active::before, .tab.active::after { content: ""; position: absolute; bottom: 0; width: 8px; height: 8px; }
.tab.active::before { left: -8px; background: radial-gradient(circle at 0 0, #dee1e6 7.5px, #fff 8px); }
.tab.active::after { right: -8px; background: radial-gradient(circle at 100% 0, #dee1e6 7.5px, #fff 8px); }
.tab.sep { background: linear-gradient(#8b8e92, #8b8e92) no-repeat 234px 6px / 1px 20px; }
.fade { -webkit-mask-image: linear-gradient(90deg, #000 150px, transparent 175px); mask-image: linear-gradient(90deg, #000 150px, transparent 175px); }
.newtab { width: 14px; height: 14px; margin: 0 0 2px 16px; }
.winbtns { display: flex; gap: 22px; margin-left: auto; padding-right: 11px; }

.navbar { height: 36px; flex: none; display: flex; align-items: center; padding-left: 14px; }
.nb { width: 16px; height: 16px; margin-right: 16px; }
.omni { width: 1150px; height: 28px; margin-left: -2px; border-radius: 14px; background: #f1f3f4; display: flex; align-items: center; padding: 0 11px 0 13px; }
.url { flex: 1; margin-left: 11px; font-size: 14px; letter-spacing: .06px; color: #75787c; white-space: nowrap; }
.url b { font-weight: 400; color: #202124; }
.ext { position: relative; width: 24px; height: 20px; margin-left: 14px; }
.ext i { position: absolute; left: 9px; top: 8px; width: 12px; height: 12px; border-radius: 2px; background: #4285f4; color: #fff; font: 9px/12px Roboto, sans-serif; text-align: center; }
.puz { width: 16px; height: 16px; margin-left: 8px; }
.dots { width: 4px; height: 14px; margin-left: 22px; }

.bookmarks { height: 34px; flex: none; border-bottom: 1px solid #d6d7d9; display: flex; padding: 0 0 3px 15px; font-size: 12px; color: #3c4043; }
.bookmarks div { display: flex; align-items: center; gap: 8px; white-space: nowrap; letter-spacing: .05px; }
.bookmarks svg { width: 16px; height: 16px; }
.w1 { width: 241px; } .bookmarks .w1 { gap: 7px; } .w2 { width: 154px; } .w3 { width: 131px; } .w4 { width: 80px; } .w5 { width: 154px; } .w6 { width: 92px; }

.head { height: 40px; flex: none; background: #f8f8f8; display: flex; align-items: center; padding-left: 5px; letter-spacing: .05px; }
.logo { width: 35px; height: 35px; background: #fff; align-self: flex-start; margin-top: 2px; }
.burger { margin-left: 12px; margin-top: 1px; } .vers { margin-left: 12px; } .ins { margin-left: 13px; }
h1 { margin: 0 0 0 17px; font-size: 24px; line-height: 40px; width: 146px; white-space: nowrap; letter-spacing: -.52px; padding-top: 1px; }
.main { font-size: 16px; color: #888; width: 70px; padding-top: 6px; letter-spacing: -.1px; }
.cap { width: 20px; height: 20px; background: #fff; border-radius: 3px; padding: 2px 1px; }
.bub { margin-left: 491px; }
.btn { height: 34px; border: 1px solid #ccc; border-radius: 3px; background: #fff; line-height: 33px; text-align: center; white-space: nowrap; }
.app { width: 87px; margin-left: 10px; } .learn { width: 126px; margin-left: 8px; } .share { width: 62px; margin-left: 8px; background: #1651b0; border-color: #1651b0; color: #fff; }
.help { margin-left: 10px; } .car { width: 8px; height: 4px; margin-left: 4px; } .c1 { margin-left: 3px; }
.ava { margin-left: 11px; } .user { width: 77px; margin-left: 3px; white-space: nowrap; }

.tools { height: 36px; flex: none; display: flex; align-items: center; }
.tools u { width: 4px; height: 26px; flex: none; border-left: 2px solid #ddd; border-right: 2px solid #fff; }
.ic { width: 34px; flex: none; display: flex; justify-content: center; }
.ic svg, .sk svg { width: 18px; height: 18px; }
.ic.redo { margin-left: 1px; }
.ic .big { width: 20px; height: 20px; }
.sk { width: 85px; flex: none; display: flex; align-items: center; padding-left: 8px; gap: 5px; letter-spacing: .05px; }
.ch { width: 18px; flex: none; padding-left: 3px; } .ch svg { width: 10px; height: 6px; }
.search { margin-left: 11px; width: 146px; height: 30px; border-radius: 3px; background: #ededed; display: flex; align-items: center; padding-left: 9px; white-space: nowrap; }
.search span { width: 91px; letter-spacing: 0; }
kbd { width: 18px; height: 18px; font: 11.5px/17px Roboto, sans-serif; border: 1px solid #aaa; border-radius: 2px; text-align: center; }
kbd.kc { width: 17px; margin-left: 1px; }

.work { flex: 1; display: flex; min-height: 0; }
aside { width: 206px; flex: none; border: solid #ccc; border-width: 1px 1px 1px 0; letter-spacing: -.18px; }
.ft { height: 32px; display: flex; padding: 7px 0 0 4px; align-items: flex-start; font-size: 13.5px; }
.ft b { width: 132px; white-space: nowrap; letter-spacing: -.15px; } .addf { margin-top: 3px; } .clock { margin: 0 0 0 11px; }
.filter { height: 30px; display: flex; align-items: center; padding-left: 14px; gap: 13px; }
.inp { width: 145px; height: 30px; border: 1px solid #c4c4c4; border-top-color: #999; border-radius: 3px; font-style: italic; color: #888; line-height: 30px; padding-left: 5px; white-space: nowrap; letter-spacing: -.34px; }
.row { height: 26px; display: flex; align-items: center; white-space: nowrap; }
.sec { margin-top: 4px; padding-left: 3px; letter-spacing: -.25px; } .big-ch { width: 14px; height: 8px; margin-right: 6px; }
.tree { position: relative; padding-left: 26px; }
.tree::before { content: ""; position: absolute; left: 4px; top: 0; width: 7px; bottom: 0; border-right: 1px solid #c4c4c4; }
.tree::after { content: ""; position: absolute; left: 5px; bottom: 0; width: 10px; border-bottom: 1px solid #c4c4c4; }
.org { width: 9px; height: 9px; margin: 0 8px 0 3px; }
.pl { width: 16px; height: 16px; margin-right: 4px; }
.dim { color: #999; } .dim svg { opacity: .42; }
.f { padding-left: 6px; } .f svg { width: 16px; height: 16px; margin-right: 4px; }
.parts { margin-top: 5px; position: relative; }
.parts::before { content: ""; position: absolute; left: 0; top: -1px; width: 200px; border-top: 1px solid #c4c4c4; }
.t2 { padding-left: 23px; }
main { flex: 1; position: relative; }
.handle { position: absolute; left: -1px; top: 230px; width: 33px; height: 34px; border: 1px solid #ccc; border-left: 0; background: #fff; padding: 7px; }
.wheel { position: absolute; left: 504px; top: 151px; width: 150px; height: 205px; }
.cube { position: absolute; left: 984px; top: 6px; width: 176px; height: 170px; }
.faces { font-family: Roboto, sans-serif; fill: #222; }
.axes { font: 700 32px Roboto, sans-serif; }
.rpanel { position: absolute; right: 0; top: 197px; width: 32px; border: 1px solid #ccc; border-right: 0; background: #fff; }
.rpanel div { height: 32px; padding: 6px; } .rpanel div + div { height: 33px; border-top: 1px solid #ccc; padding-top: 5px; } .rpanel svg { width: 20px; height: 20px; }
.measure { position: absolute; left: 1096px; bottom: 6px; display: flex; gap: 19px; }

.btabs { height: 30px; flex: none; background: #d0d0d0; display: flex; align-items: flex-start; color: #666; letter-spacing: -.02px; }
.s1 { width: 17px; height: 16px; margin: 7px 0 0 9px; } .s2 { width: 15px; height: 15px; margin: 7px 15px 0 20px; }
.bt { width: 200px; height: 27px; margin-right: 2px; flex: none; background: #e8e8e8; border-radius: 0 0 5px 5px; box-shadow: 0 1px 1px #aaa; display: flex; align-items: center; padding-left: 12px; }
.bt svg { width: 18px; height: 18px; margin-right: 3px; }
.bt.cur { background: #fff; color: #333; border-bottom: 2px solid #1651b0; height: 28px; }

footer { height: 48px; flex: none; background: #2a2833; display: flex; align-items: center; padding-left: 6px; }
.launch { width: 36px; height: 36px; border-radius: 50%; background: #3d3b45; display: grid; place-items: center; }
.launch i { width: 14px; height: 14px; border: 2.5px solid #fff; border-radius: 50%; }
.apps { display: flex; margin-left: 306px; }
.apps div { width: 56px; height: 48px; display: grid; place-items: center; position: relative; }
.apps svg { width: 33px; height: 33px; }
.apps div::after { content: ""; position: absolute; bottom: 2px; height: 2px; width: 0; background: #fff; border-radius: 1px; }
.apps .on::after { width: 10px; } .apps .run::after { width: 6px; background: #8e8d94; }
.status { margin-left: 189px; width: 150px; height: 36px; border-radius: 18px; background: #3d3b45; display: flex; align-items: center; padding-left: 12px; color: #fff; }
.us { width: 26px; }
.status i { width: 16px; height: 16px; border-radius: 50%; background: #fff; color: #2a2833; font: 700 12px/16px Roboto, sans-serif; text-align: center; margin: 0 11px 0 -1px; }
.bat { margin: 0 8px 0 10px; }
```
